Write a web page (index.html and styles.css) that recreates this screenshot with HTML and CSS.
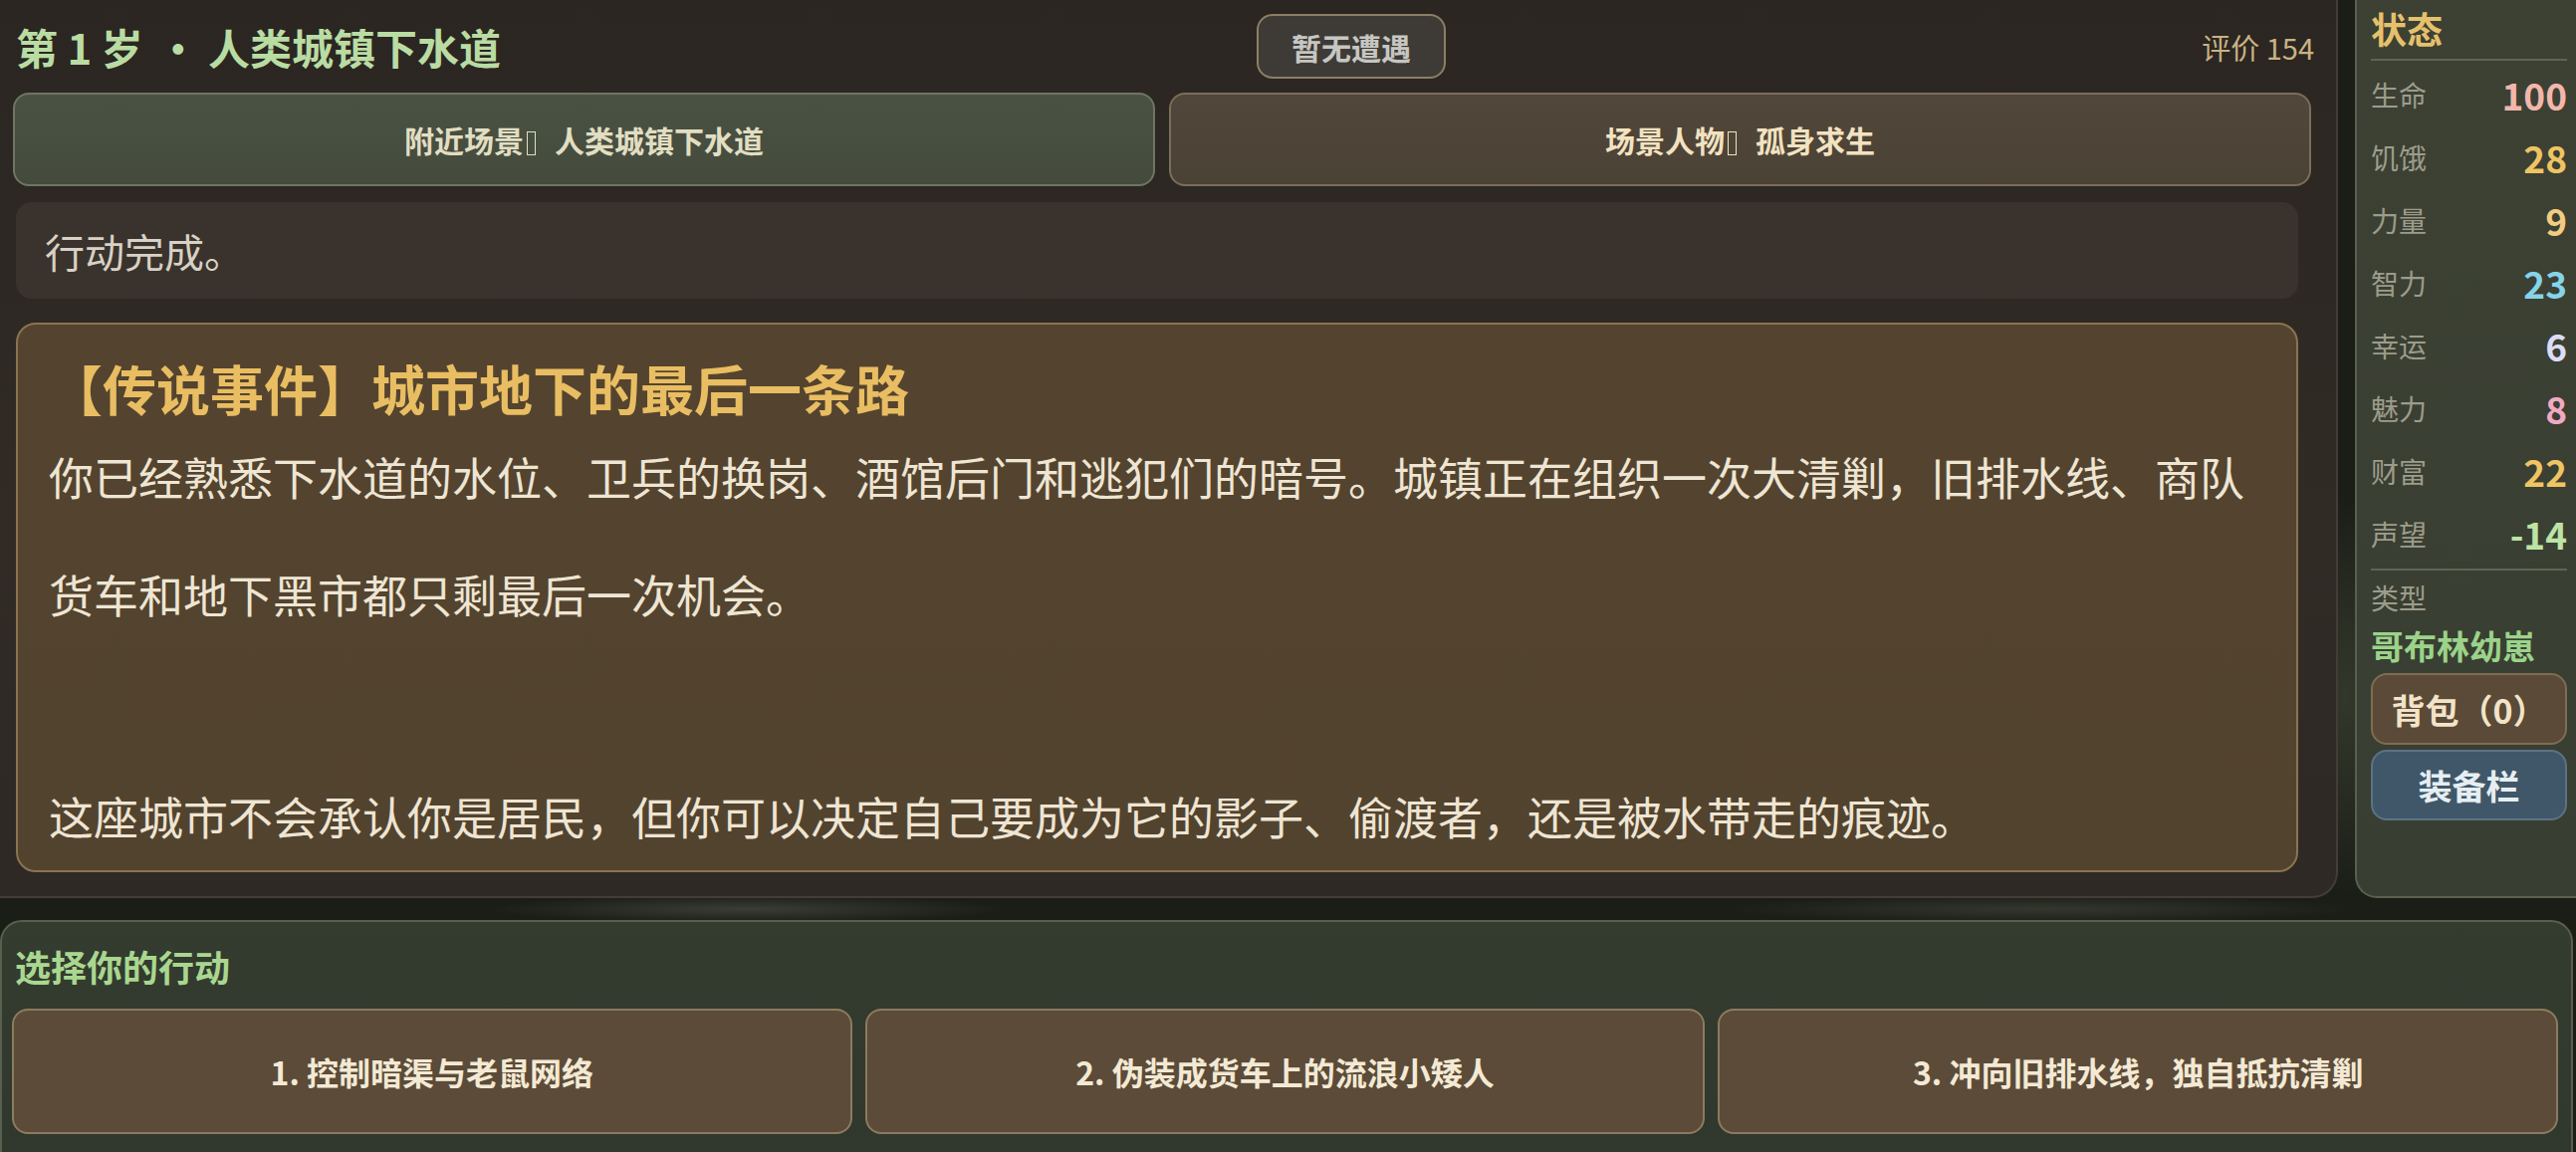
FILE: index.html
```html
<!DOCTYPE html>
<html lang="zh-CN">
<head>
    <meta charset="UTF-8">
    <meta name="viewport" content="width=device-width, initial-scale=1.0">
    <title>第 1 岁 · 人类城镇下水道</title>
    <link rel="stylesheet" href="styles.css">
</head>
<body>
    <div class="game">
        <div class="top-area">
            <!-- 主面板：标题、场景、事件 -->
            <main class="main-panel">
                <header class="head-row">
                    <h1 class="age-title">第 1 岁<span class="dot">·</span>人类城镇下水道</h1>
                    <button type="button" class="encounter-btn">暂无遭遇</button>
                    <span class="score">评价 154</span>
                </header>

                <div class="scene-row">
                    <button type="button" class="scene-btn scene-place">附近场景<span class="tofu"></span>人类城镇下水道</button>
                    <button type="button" class="scene-btn scene-people">场景人物<span class="tofu"></span>孤身求生</button>
                </div>

                <div class="scroll-area">
                    <div class="message">行动完成。</div>

                    <section class="story-card">
                        <h2 class="story-title">【传说事件】城市地下的最后一条路</h2>
                        <p class="story-text">你已经熟悉下水道的水位、卫兵的换岗、酒馆后门和逃犯们的暗号。城镇正在组织一次大清剿，旧排水线、商队货车和地下黑市都只剩最后一次机会。</p>
                        <p class="story-text story-end">这座城市不会承认你是居民，但你可以决定自己要成为它的影子、偷渡者，还是被水带走的痕迹。</p>
                    </section>
                </div>
            </main>

            <!-- 状态栏 -->
            <aside class="side-panel">
                <h3 class="side-title">状态</h3>
                <ul class="stat-list">
                    <li><span class="stat-name">生命</span><span class="stat-val v-hp">100</span></li>
                    <li><span class="stat-name">饥饿</span><span class="stat-val v-gold">28</span></li>
                    <li><span class="stat-name">力量</span><span class="stat-val v-str">9</span></li>
                    <li><span class="stat-name">智力</span><span class="stat-val v-int">23</span></li>
                    <li><span class="stat-name">幸运</span><span class="stat-val v-luck">6</span></li>
                    <li><span class="stat-name">魅力</span><span class="stat-val v-charm">8</span></li>
                    <li><span class="stat-name">财富</span><span class="stat-val v-gold">22</span></li>
                    <li><span class="stat-name">声望</span><span class="stat-val v-fame">-14</span></li>
                </ul>
                <div class="char-type">
                    <span class="stat-name">类型</span>
                    <span class="type-name">哥布林幼崽</span>
                </div>
                <button type="button" class="side-btn bag-btn">背包（0）</button>
                <button type="button" class="side-btn equip-btn">装备栏</button>
            </aside>
        </div>

        <!-- 行动选择 -->
        <section class="action-panel">
            <h3 class="action-title">选择你的行动</h3>
            <div class="action-list">
                <button type="button" class="action-btn">1. 控制暗渠与老鼠网络</button>
                <button type="button" class="action-btn">2. 伪装成货车上的流浪小矮人</button>
                <button type="button" class="action-btn">3. 冲向旧排水线，独自抵抗清剿</button>
            </div>
        </section>
    </div>
</body>
</html>
```

FILE: styles.css
```css
* {
    box-sizing: border-box;
}

body {
    margin: 0;
    width: 2587px;
    height: 1157px;
    overflow: hidden;
    font-family: "Noto Sans CJK SC", "Noto Sans", sans-serif;
    background-color: #1b1e17;
    background-image:
        radial-gradient(ellipse 80px 200px at 2356px 700px, #33382b 0, transparent 100%),
        radial-gradient(ellipse 260px 14px at 750px 913px, #3a3d33 0, transparent 100%),
        radial-gradient(ellipse 320px 14px at 2050px 913px, #33372d 0, transparent 100%);
}

button {
    font-family: inherit;
    cursor: pointer;
}

.top-area {
    display: flex;
    gap: 17px;
    height: 902px;
}

/* 主面板 */
.main-panel {
    width: 2348px;
    flex-shrink: 0;
    display: flex;
    flex-direction: column;
    padding: 0 25px 0 13px;
    background: linear-gradient(180deg, #2b2621 0%, #312b26 60%, #2e2924 100%);
    border: 2px solid #443d35;
    border-top: none;
    border-left: none;
    border-radius: 0 0 26px 0;
}

.head-row {
    height: 93px;
    display: flex;
    align-items: center;
    justify-content: space-between;
}

.age-title {
    margin: 0 0 0 3px;
    font-size: 42px;
    font-weight: bold;
    color: #b9dca3;
    line-height: 1;
}

.age-title .dot {
    margin: 0 9px 0 14px;
}

.encounter-btn {
    width: 190px;
    height: 65px;
    padding: 0;
    font-size: 30px;
    font-weight: bold;
    color: #c6c6c2;
    background-color: #3e3b36;
    border: 2px solid #8c7f66;
    border-radius: 16px;
}

.score {
    font-size: 29px;
    color: #c9b283;
    margin-right: -3px;
}

/* 场景按钮 */
.scene-row {
    display: flex;
    gap: 14px;
    height: 94px;
}

.scene-btn {
    flex: 1;
    font-size: 30px;
    font-weight: bold;
    border-radius: 16px;
    border: 2px solid;
}

.scene-place {
    color: #e1dec2;
    background: linear-gradient(180deg, #4a5243, #444b3d);
    border-color: #6f7563;
}

.scene-people {
    color: #f2e2c0;
    background: linear-gradient(180deg, #51473a, #4b4236);
    border-color: #7b6e5a;
}

/* 无法显示的冒号 */
.tofu {
    display: inline-block;
    width: 9px;
    height: 24px;
    margin: 0 19px 0 3px;
    border: 1px solid currentColor;
    vertical-align: -3px;
}

.scroll-area {
    display: flex;
    flex-direction: column;
    margin-top: 16px;
    padding: 0 13px 0 3px;
}

.message {
    height: 97px;
    display: flex;
    align-items: center;
    padding-left: 29px;
    font-size: 40px;
    color: #d8d1c5;
    background-color: #3a332d;
    border-radius: 16px;
}

/* 事件卡片 */
.story-card {
    margin-top: 24px;
    height: 552px;
    padding: 34px 31px 0;
    background: linear-gradient(180deg, #54442f, #52432f);
    border: 2px solid #8a7450;
    border-radius: 20px;
    color: #eee5d3;
}

.story-title {
    margin: 0;
    font-size: 54px;
    line-height: 60px;
    font-weight: bold;
    color: #e9bd62;
}

.story-text {
    margin: 0;
    font-size: 45px;
    line-height: 118px;
}

.story-end {
    margin-top: 124px;
    line-height: 80px;
}

/* 状态栏 */
.side-panel {
    flex: 1;
    display: flex;
    flex-direction: column;
    padding: 6px 9px 0 14px;
    background: linear-gradient(180deg, #3c4134, #393e32);
    border: 2px solid #5a604e;
    border-top: none;
    border-right: none;
    border-radius: 0 0 0 22px;
}

.side-title {
    margin: 0;
    font-size: 36px;
    line-height: 44px;
    font-weight: bold;
    color: #e6c06c;
    padding-bottom: 9px;
    border-bottom: 2px solid #5f6553;
}

.stat-list {
    list-style: none;
    margin: 2px 0 0;
    padding: 0 0 4px;
    border-bottom: 2px solid #5f6553;
}

.stat-list li {
    height: 63px;
    display: flex;
    align-items: center;
    justify-content: space-between;
}

.stat-name {
    font-size: 28px;
    color: #9d9c8a;
}

.stat-val {
    font-size: 37px;
    font-weight: bold;
}

.v-hp { color: #f2b6ab; }
.v-gold { color: #f0c463; }
.v-str { color: #f2cc80; }
.v-int { color: #86d3ea; }
.v-luck { color: #dcdcf6; }
.v-charm { color: #f2a9c4; }
.v-fame { color: #bde3a5; }

.char-type {
    display: flex;
    flex-direction: column;
    margin-top: 7px;
}

.char-type .stat-name {
    line-height: 40px;
}

.type-name {
    margin-top: 8px;
    font-size: 33px;
    line-height: 40px;
    font-weight: bold;
    color: #9bd38a;
}

.side-btn {
    height: 72px;
    font-size: 34px;
    font-weight: bold;
    border-radius: 16px;
    border: 2px solid;
}

.bag-btn {
    margin-top: 8px;
    color: #f3e3c8;
    background-color: #5a4a37;
    border-color: #7e6d52;
}

.equip-btn {
    margin-top: 5px;
    height: 71px;
    color: #e6eef2;
    background-color: #3f5768;
    border-color: #5b7384;
}

/* 行动选择 */
.action-panel {
    margin: 22px 3px 0 0;
    height: 260px;
    padding: 19px 13px 0 10px;
    background: linear-gradient(180deg, #343c30, #30372c);
    border: 2px solid #56604c;
    border-radius: 22px 22px 0 0;
}

.action-title {
    margin: 0 0 0 3px;
    font-size: 36px;
    line-height: 50px;
    font-weight: bold;
    color: #a9d78f;
}

.action-list {
    display: flex;
    gap: 13px;
    margin-top: 18px;
}

.action-btn {
    flex: 1;
    height: 126px;
    font-size: 32px;
    font-weight: bold;
    color: #f3e9d4;
    background-color: #5b4b38;
    border: 2px solid #8c7b5f;
    border-radius: 16px;
}
```
